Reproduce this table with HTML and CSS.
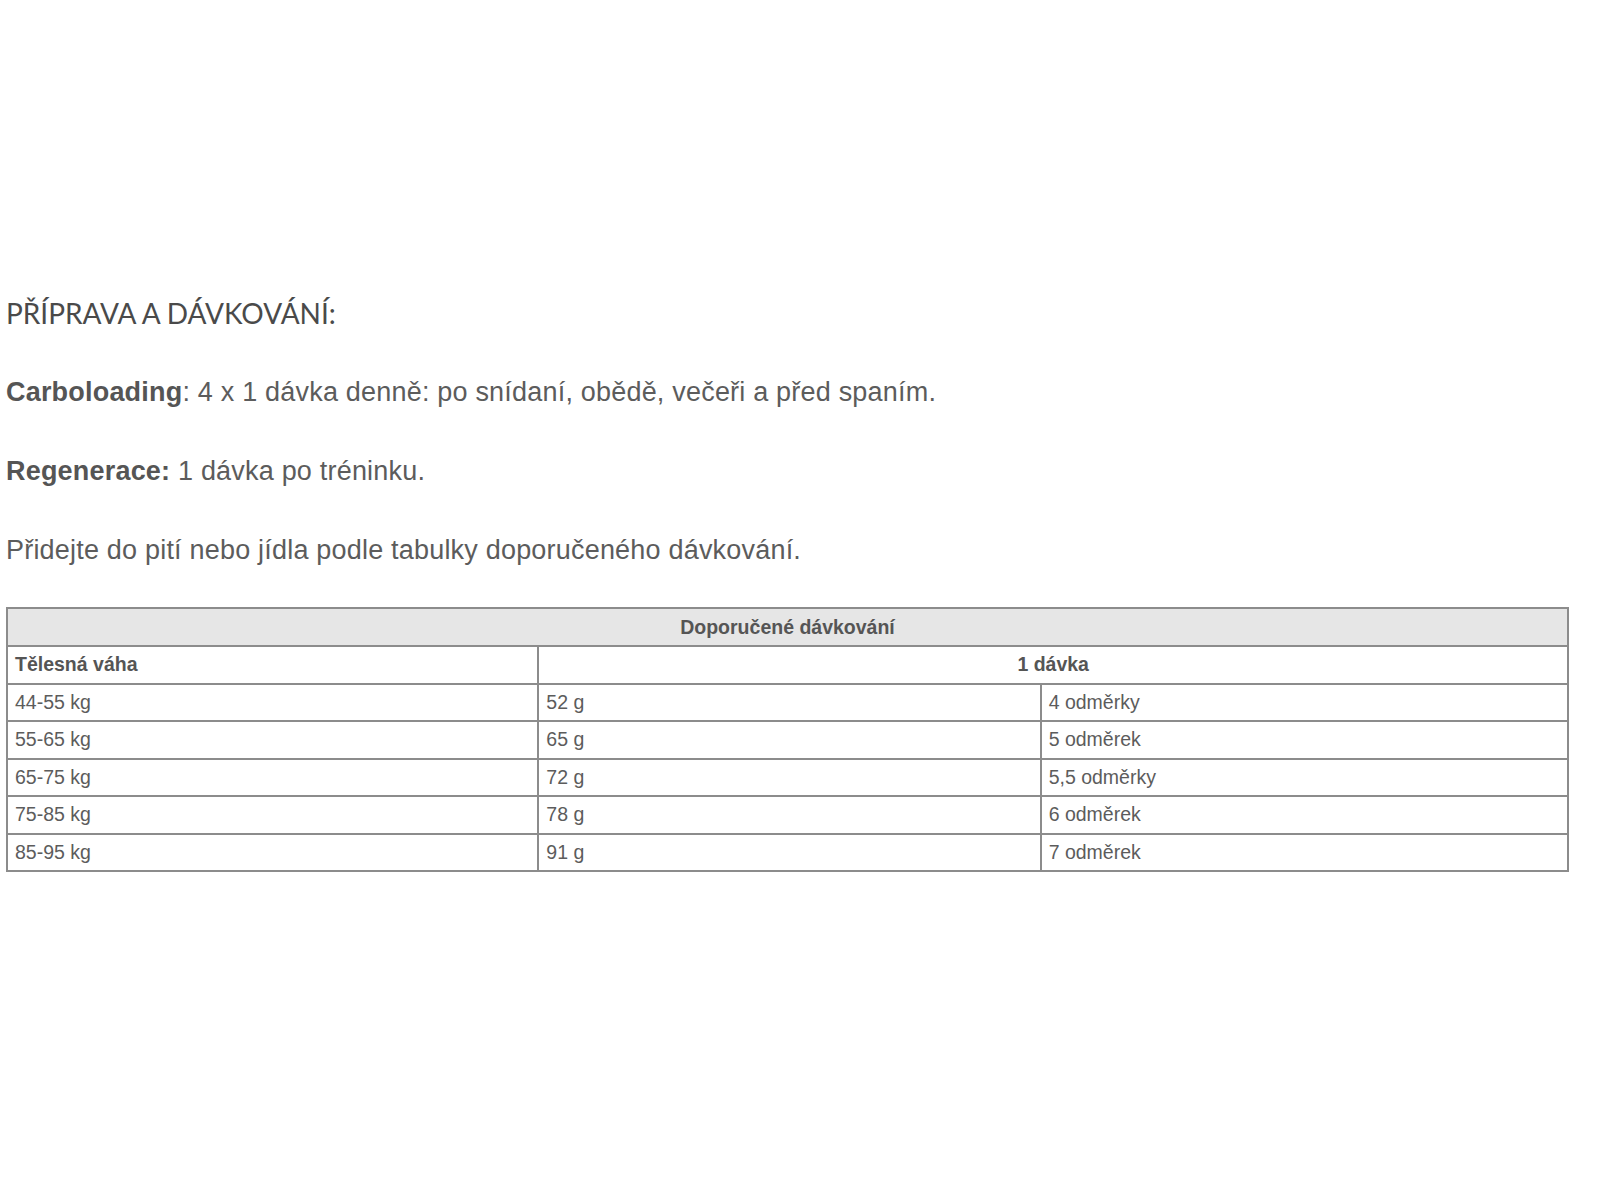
FILE: index.html
```html
<!DOCTYPE html>
<html lang="cs">
<head>
<meta charset="utf-8">
<title>Příprava a dávkování</title>
<link rel="stylesheet" href="styles.css">
</head>
<body>
<main class="page">
  <h2 class="title">PŘÍPRAVA A DÁVKOVÁNÍ:</h2>
  <p class="para"><strong>Carboloading</strong>: 4 x 1 dávka denně: po snídaní, obědě, večeři a před spaním.</p>
  <p class="para"><strong>Regenerace:</strong> 1 dávka po tréninku.</p>
  <p class="para">Přidejte do pití nebo jídla podle tabulky doporučeného dávkování.</p>
  <table class="dose">
    <colgroup>
      <col class="c1">
      <col class="c2">
      <col class="c3">
    </colgroup>
    <thead>
      <tr class="head"><th colspan="3">Doporučené dávkování</th></tr>
      <tr class="sub"><th class="left">Tělesná váha</th><th colspan="2">1 dávka</th></tr>
    </thead>
    <tbody>
      <tr><td>44-55 kg</td><td>52 g</td><td>4 odměrky</td></tr>
      <tr><td>55-65 kg</td><td>65 g</td><td>5 odměrek</td></tr>
      <tr><td>65-75 kg</td><td>72 g</td><td>5,5 odměrky</td></tr>
      <tr><td>75-85 kg</td><td>78 g</td><td>6 odměrek</td></tr>
      <tr><td>85-95 kg</td><td>91 g</td><td>7 odměrek</td></tr>
    </tbody>
  </table>
</main>
</body>
</html>
```
FILE: styles.css
```css
html, body {
  margin: 0;
  padding: 0;
  background: #ffffff;
}

.page {
  padding: 293px 32px 0 6px;
  color: #5a5a5a;
  font-family: "Liberation Sans", Arial, sans-serif;
}

.title {
  margin: 0 0 39px 0;
  font-family: Lato, "Open Sans", sans-serif;
  font-weight: 400;
  font-size: 28px;
  line-height: 40px;
  color: #4a4a4a;
  letter-spacing: 0;
}

.para {
  margin: 0 0 39px 0;
  font-size: 27px;
  line-height: 40px;
  letter-spacing: 0.2px;
  color: #5c5c5c;
}

.para:last-of-type {
  margin-bottom: 37px;
}

.para strong {
  font-weight: 700;
  color: #555555;
}

.dose {
  width: 1563px;
  border-collapse: collapse;
  border: 2px solid #8c8c8c;
  font-size: 19.5px;
  color: #5c5c5c;
}

.c1 { width: 532px; }
.c2 { width: 503px; }
.c3 { width: 528px; }

.dose th,
.dose td {
  border: 2px solid #8c8c8c;
  height: 35.5px;
  padding: 0 7px;
  text-align: left;
  vertical-align: middle;
  font-weight: 400;
}

.dose th {
  font-weight: 700;
  text-align: center;
  color: #555555;
}

.dose th.left {
  text-align: left;
}

.dose .head th {
  background: #e6e6e6;
  height: 36px;
}
```
